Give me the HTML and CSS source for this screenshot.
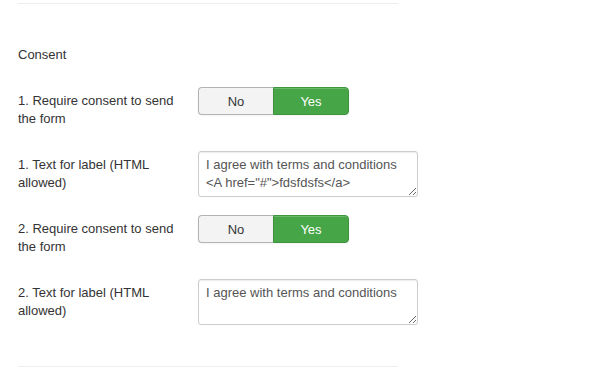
FILE: index.html
```html
<!DOCTYPE html>
<html lang="en">
<head>
    <meta charset="UTF-8">
    <meta name="viewport" content="width=device-width, initial-scale=1.0">
    <title>Consent</title>
    <link rel="stylesheet" href="styles.css">
</head>
<body>
    <div class="panel">
        <hr class="rule">
        <div class="legend">Consent</div>
        <div class="control-group">
            <div class="control-label">1. Require consent to send the form</div>
            <div class="controls">
                <div class="btn-group">
                    <button class="btn">No</button>
                    <button class="btn btn-success">Yes</button>
                </div>
            </div>
        </div>
        <div class="control-group">
            <div class="control-label">1. Text for label (HTML allowed)</div>
            <div class="controls">
                <textarea class="field">I agree with terms and conditions &lt;A href="#"&gt;fdsfdsfs&lt;/a&gt;</textarea>
            </div>
        </div>
        <div class="control-group">
            <div class="control-label">2. Require consent to send the form</div>
            <div class="controls">
                <div class="btn-group">
                    <button class="btn">No</button>
                    <button class="btn btn-success">Yes</button>
                </div>
            </div>
        </div>
        <div class="control-group">
            <div class="control-label">2. Text for label (HTML allowed)</div>
            <div class="controls">
                <textarea class="field">I agree with terms and conditions</textarea>
            </div>
        </div>
        <hr class="rule rule-bottom">
    </div>
</body>
</html>
```

FILE: styles.css
```css
body {
    margin: 0;
    background-color: #fff;
    font-family: "Liberation Sans", Arial, sans-serif;
    font-size: 13px;
    line-height: 18px;
    color: #333;
}

.panel {
    width: 380px;
    padding: 3px 0 0 18px;
}

.rule {
    margin: 0;
    border: 0;
    border-top: 1px solid #eee;
}

.rule-bottom {
    margin-top: 41px;
}

.legend {
    margin: 42px 0 23px;
}

.control-group {
    display: flex;
    height: 46px;
    margin-bottom: 18px;
}

.control-label {
    flex-shrink: 0;
    width: 160px;
    padding-top: 5px;
    margin-right: 20px;
}

.btn-group {
    display: flex;
}

.btn {
    width: 75px;
    height: 28px;
    padding: 0;
    font-family: inherit;
    font-size: 13px;
    color: #333;
    background-color: #f3f3f3;
    border: 1px solid #b3b3b3;
    border-right: 0;
    border-radius: 4px 0 0 4px;
    box-shadow: inset 0 1px 0 rgba(255, 255, 255, 0.2), 0 1px 2px rgba(0, 0, 0, 0.05);
}

.btn-success {
    width: 76px;
    color: #fff;
    background-color: #46a546;
    border: 1px solid #3f933f;
    border-radius: 0 4px 4px 0;
}

.field {
    display: block;
    box-sizing: border-box;
    width: 220px;
    height: 46px;
    margin: 0;
    padding: 4px 7px;
    font-family: inherit;
    font-size: 13px;
    line-height: 18px;
    color: #555;
    border: 1px solid #ccc;
    border-radius: 3px;
    box-shadow: inset 0 1px 1px rgba(0, 0, 0, 0.075);
    resize: vertical;
}
```
